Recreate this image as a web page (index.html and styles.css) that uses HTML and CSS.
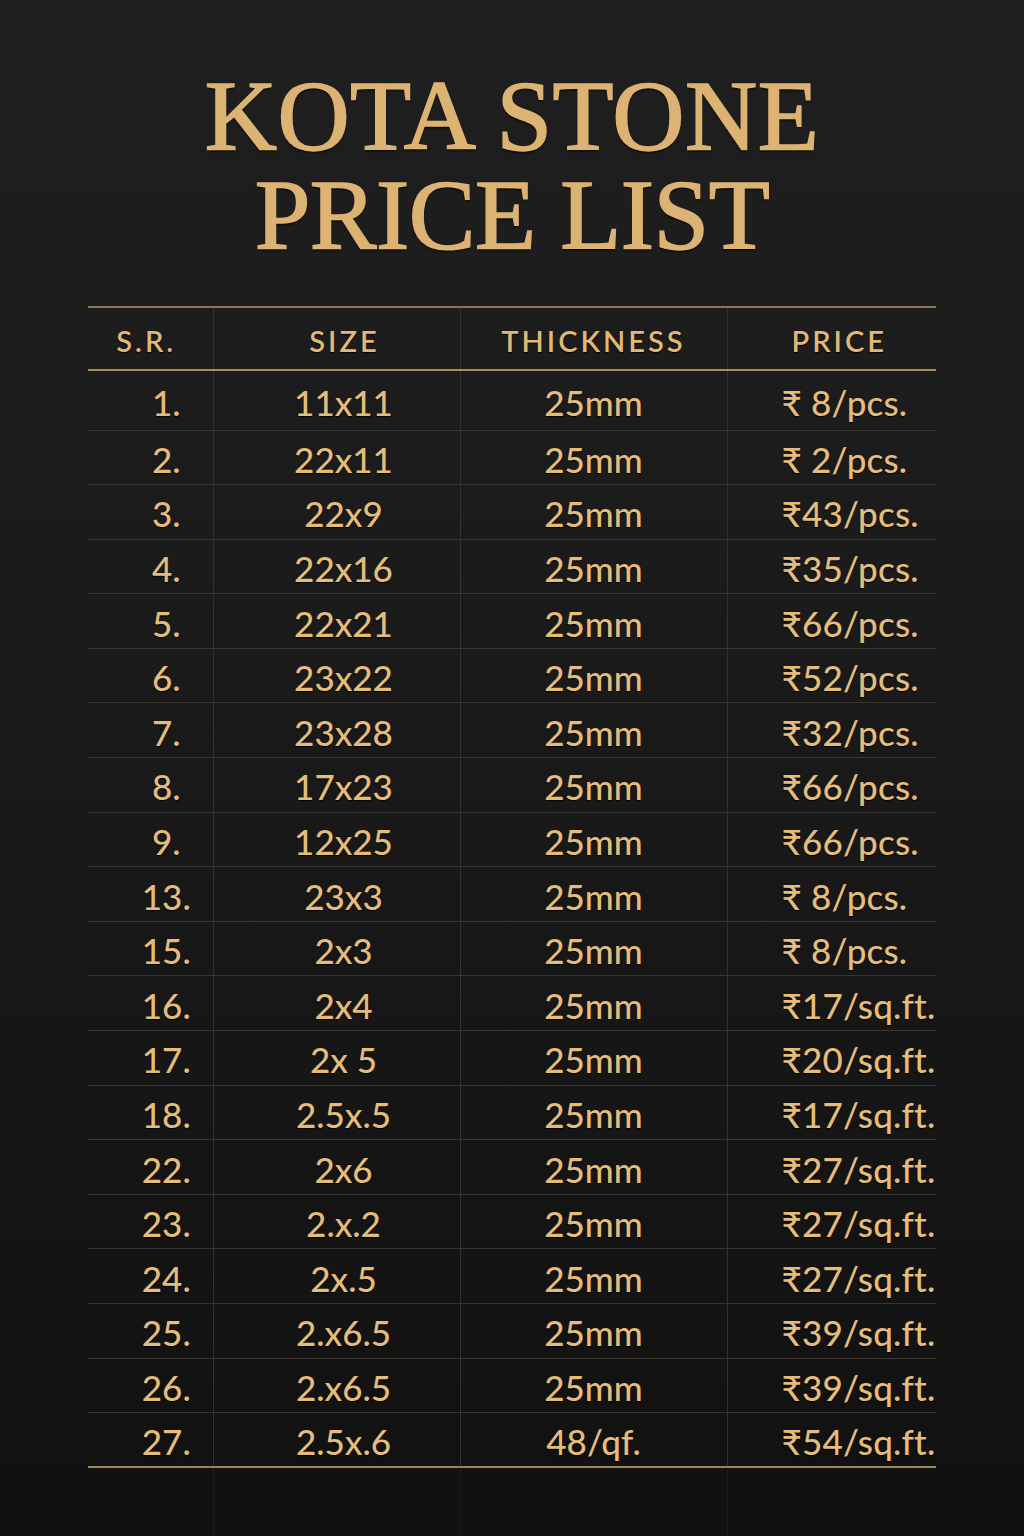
FILE: index.html
```html
<!DOCTYPE html>
<html lang="en">
<head>
<meta charset="utf-8">
<title>Kota Stone Price List</title>
<link rel="stylesheet" href="styles.css">
</head>
<body>
<main class="page">
  <h1 class="title"><span class="title-line">KOTA STONE</span><span class="title-line">PRICE LIST</span></h1>
  <table class="price-table">
    <colgroup>
      <col class="w-sr"><col class="w-size"><col class="w-thick"><col class="w-price">
    </colgroup>
    <thead>
      <tr>
        <th class="c-sr">S.R.</th>
        <th class="c-size">SIZE</th>
        <th class="c-thick">THICKNESS</th>
        <th class="c-price">PRICE</th>
      </tr>
    </thead>
    <tbody>
      <tr class="first"><td class="c-sr">1.</td><td class="c-size">11x11</td><td class="c-thick">25mm</td><td class="c-price">₹ 8/pcs.</td></tr>
      <tr><td class="c-sr">2.</td><td class="c-size">22x11</td><td class="c-thick">25mm</td><td class="c-price">₹ 2/pcs.</td></tr>
      <tr><td class="c-sr">3.</td><td class="c-size">22x9</td><td class="c-thick">25mm</td><td class="c-price">₹43/pcs.</td></tr>
      <tr><td class="c-sr">4.</td><td class="c-size">22x16</td><td class="c-thick">25mm</td><td class="c-price">₹35/pcs.</td></tr>
      <tr><td class="c-sr">5.</td><td class="c-size">22x21</td><td class="c-thick">25mm</td><td class="c-price">₹66/pcs.</td></tr>
      <tr><td class="c-sr">6.</td><td class="c-size">23x22</td><td class="c-thick">25mm</td><td class="c-price">₹52/pcs.</td></tr>
      <tr><td class="c-sr">7.</td><td class="c-size">23x28</td><td class="c-thick">25mm</td><td class="c-price">₹32/pcs.</td></tr>
      <tr><td class="c-sr">8.</td><td class="c-size">17x23</td><td class="c-thick">25mm</td><td class="c-price">₹66/pcs.</td></tr>
      <tr><td class="c-sr">9.</td><td class="c-size">12x25</td><td class="c-thick">25mm</td><td class="c-price">₹66/pcs.</td></tr>
      <tr><td class="c-sr">13.</td><td class="c-size">23x3</td><td class="c-thick">25mm</td><td class="c-price">₹ 8/pcs.</td></tr>
      <tr><td class="c-sr">15.</td><td class="c-size">2x3</td><td class="c-thick">25mm</td><td class="c-price">₹ 8/pcs.</td></tr>
      <tr><td class="c-sr">16.</td><td class="c-size">2x4</td><td class="c-thick">25mm</td><td class="c-price">₹17/sq.ft.</td></tr>
      <tr><td class="c-sr">17.</td><td class="c-size">2x 5</td><td class="c-thick">25mm</td><td class="c-price">₹20/sq.ft.</td></tr>
      <tr><td class="c-sr">18.</td><td class="c-size">2.5x.5</td><td class="c-thick">25mm</td><td class="c-price">₹17/sq.ft.</td></tr>
      <tr><td class="c-sr">22.</td><td class="c-size">2x6</td><td class="c-thick">25mm</td><td class="c-price">₹27/sq.ft.</td></tr>
      <tr><td class="c-sr">23.</td><td class="c-size">2.x.2</td><td class="c-thick">25mm</td><td class="c-price">₹27/sq.ft.</td></tr>
      <tr><td class="c-sr">24.</td><td class="c-size">2x.5</td><td class="c-thick">25mm</td><td class="c-price">₹27/sq.ft.</td></tr>
      <tr><td class="c-sr">25.</td><td class="c-size">2.x6.5</td><td class="c-thick">25mm</td><td class="c-price">₹39/sq.ft.</td></tr>
      <tr><td class="c-sr">26.</td><td class="c-size">2.x6.5</td><td class="c-thick">25mm</td><td class="c-price">₹39/sq.ft.</td></tr>
      <tr class="last"><td class="c-sr">27.</td><td class="c-size">2.5x.6</td><td class="c-thick">48/qf.</td><td class="c-price">₹54/sq.ft.</td></tr>
    </tbody>
  </table>
  <div class="tail">
    <span></span><span></span><span></span><span></span>
  </div>
</main>
</body>
</html>
```
FILE: styles.css
```css
html, body {
  margin: 0;
  padding: 0;
}
body {
  background: linear-gradient(180deg, #1f1f1f 0%, #1a1a1a 45%, #111111 100%);
  min-height: 1536px;
  color: #e2ba79;
  font-family: "Lato", "Noto Sans", sans-serif;
}
.page {
  width: 848px;
  margin: 0 0 0 88px;
  padding-top: 66px;
  display: flex;
  flex-direction: column;
}
.title {
  margin: 0 0 42px -88px;
  width: 1024px;
  display: flex;
  flex-direction: column;
  align-items: center;
  font-family: "Liberation Serif", "DejaVu Serif", serif;
  font-weight: 400;
  font-size: 100px;
  line-height: 99px;
  color: #dcb373;
  -webkit-text-stroke: 1.6px #dcb373;
  text-shadow: 0 2px 2px rgba(0,0,0,0.8);
}
.title-line {
  display: block;
  white-space: nowrap;
  letter-spacing: 0.5px;
}
.title-line + .title-line {
  letter-spacing: -0.5px;
}
.price-table {
  width: 848px;
  border-collapse: collapse;
  table-layout: fixed;
}
.w-sr { width: 125px; }
.w-size { width: 247px; }
.w-thick { width: 267px; }
.w-price { width: 209px; }

.price-table th,
.price-table td {
  box-sizing: border-box;
  padding: 0;
  border-left: 1px solid #35322c;
  text-shadow: 0 1px 1px rgba(0,0,0,0.85);
  white-space: nowrap;
}
.price-table th:first-child,
.price-table td:first-child {
  border-left: none;
}

.price-table thead tr {
  height: 63px;
  border-top: 2px solid #8c7552;
  border-bottom: 2px solid #a88a5c;
}
.price-table th {
  font-weight: 600;
  font-size: 29px;
  letter-spacing: 3px;
  color: #e0b878;
  text-align: center;
  padding-top: 4px;
}
.price-table th.c-sr { padding-right: 8px; }
.price-table th.c-size { padding-left: 16px; }
.price-table th.c-thick { padding-left: 0; }
.price-table th.c-price { text-align: left; padding-left: 64px; }

.price-table tbody tr {
  height: 54.6px;
  border-bottom: 1px solid #3a362f;
}
.price-table tbody tr.first { height: 60px; }
.price-table tbody tr.last { border-bottom: 2px solid #9c8258; }
.price-table td {
  font-weight: 500;
  font-size: 35px;
  color: #e4bd7d;
  text-align: center;
  padding-top: 3px;
}
.price-table td.c-sr { padding-left: 32px; }
.price-table td.c-size { padding-left: 14px; }
.price-table td.c-thick { padding-left: 0; }
.price-table td.c-price {
  text-align: left;
  padding-left: 54px;
  letter-spacing: 0.2px;
}

.tail {
  display: grid;
  grid-template-columns: 125px 247px 267px 209px;
  height: 66px;
}
.tail span {
  border-left: 1px solid #1c1c1c;
}
.tail span:first-child {
  border-left: none;
}
```
